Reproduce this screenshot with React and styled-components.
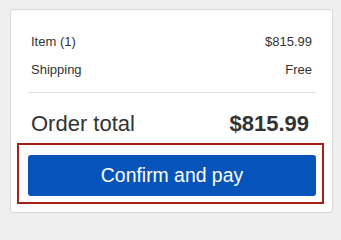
import React from "react";
import styled, { createGlobalStyle } from "styled-components";

const Global = createGlobalStyle`
  html, body {
    margin: 0;
    padding: 0;
    background: #efefef;
    font-family: "Liberation Sans", Arial, sans-serif;
    color: #333333;
  }
  #root {
    padding: 9px 8px 8px 10px;
  }
`;

const Card = styled.section`
  box-sizing: border-box;
  width: 323px;
  background: #ffffff;
  border: 1px solid #d6d6d6;
  border-radius: 3px;
  padding: 18px 16px 16px 17px;
  display: flex;
  flex-direction: column;
`;

const Row = styled.div`
  display: flex;
  justify-content: space-between;
  align-items: center;
  font-size: 13px;
  line-height: 28px;
  padding: 0 4px 0 3px;
`;

const Divider = styled.hr`
  border: 0;
  height: 1px;
  background: #dddddd;
  margin: 8px 0 0;
`;

const TotalRow = styled.div`
  display: flex;
  justify-content: space-between;
  align-items: center;
  font-size: 22px;
  line-height: 25px;
  margin-top: 18px;
  padding: 0 7px 0 3px;
`;

const TotalValue = styled.span`
  font-weight: bold;
`;

const ButtonArea = styled.div`
  position: relative;
  margin-top: 19px;
`;

const PayButton = styled.button`
  display: flex;
  align-items: center;
  justify-content: center;
  width: 288px;
  height: 41px;
  border: 0;
  border-radius: 3px;
  background: #0654ba;
  color: #ffffff;
  font-family: "Liberation Sans", Arial, sans-serif;
  font-size: 19.4px;
  padding: 0;
  cursor: pointer;
`;

const Highlight = styled.div`
  position: absolute;
  top: -12px;
  left: -11px;
  right: -8px;
  bottom: -8px;
  border: 2px solid #a52015;
  pointer-events: none;
`;

const lines = [
  { label: "Item (1)", value: "$815.99" },
  { label: "Shipping", value: "Free" },
];

export default function App() {
  return (
    <>
      <Global />
      <Card>
        {lines.map((l) => (
          <Row key={l.label}>
            <span>{l.label}</span>
            <span>{l.value}</span>
          </Row>
        ))}
        <Divider />
        <TotalRow>
          <span>Order total</span>
          <TotalValue>$815.99</TotalValue>
        </TotalRow>
        <ButtonArea>
          <PayButton>Confirm and pay</PayButton>
          <Highlight />
        </ButtonArea>
      </Card>
    </>
  );
}
